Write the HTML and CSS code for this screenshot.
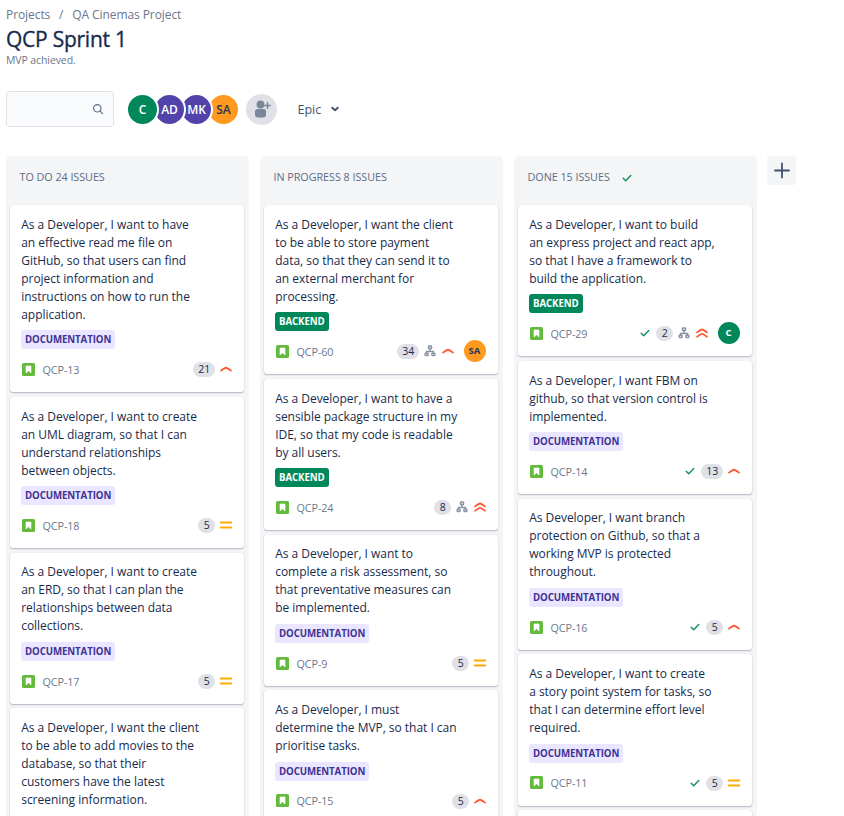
FILE: index.html
```
<!DOCTYPE html>
<html lang="en">
<head>
<meta charset="utf-8">
<title>QCP Sprint 1</title>
<link rel="stylesheet" href="styles.css">
</head>
<body>
<svg class="defs" width="0" height="0">
  <symbol id="story" viewBox="0 0 13 13"><rect width="13" height="13" rx="1.5" fill="#63ba3c"/><path d="M4 3h5v7L6.5 7.8 4 10z" fill="#fff" stroke="#fff" stroke-width=".6" stroke-linejoin="round"/></symbol>
  <symbol id="high" viewBox="0 0 14 14"><path d="M2 8.6Q4.5 6.6 7 5.6Q9.500 6.600 12 8.600" fill="none" stroke="#ff5630" stroke-width="1.7" stroke-linecap="round" stroke-linejoin="round"/></symbol>
  <symbol id="highest" viewBox="0 0 14 14"><path d="M2 6.400Q4.500 4.400 7 3.400Q9.500 4.400 12 6.400M2 10.800Q4.500 8.800 7 7.800Q9.500 8.800 12 10.800" fill="none" stroke="#ff5630" stroke-width="1.7" stroke-linecap="round" stroke-linejoin="round"/></symbol>
  <symbol id="medium" viewBox="0 0 14 14"><path d="M1.700 4.500h10.600M1.700 9.500h10.600" stroke="#ffab00" stroke-width="1.800" stroke-linecap="round"/></symbol>
  <symbol id="check" viewBox="0 0 14 14"><path d="M3.200 7.300L5.700 9.800L10.800 4.400" fill="none" stroke="#159060" stroke-width="1.400" stroke-linecap="round" stroke-linejoin="round"/></symbol>
  <symbol id="tree" viewBox="0 0 14 14"><path d="M7 5v2.500M3.500 9.500V7.500h7v2" fill="none" stroke="#8993a4" stroke-width="1.400"/><g fill="#fff" stroke="#8993a4" stroke-width="1.500"><rect x="5.500" y="2" width="3" height="2.600" rx=".5"/><rect x="2.200" y="9.300" width="2.800" height="2.300" rx=".5"/><rect x="9" y="9.300" width="2.800" height="2.300" rx=".5"/></g></symbol>
</svg>
<header class="header">
  <nav class="crumbs"><span>Projects</span><span class="slash">/</span><span>QA Cinemas Project</span></nav>
  <h1>QCP Sprint 1</h1>
  <p class="goal">MVP achieved.</p>
</header>
<div class="toolbar">
  <div class="search"><svg width="14" height="14" viewBox="0 0 14 14" fill="none" stroke="#5e6c84" stroke-width="1.200" stroke-linecap="round"><circle cx="6.300" cy="6.300" r="3.700"/><path d="M9.100 9.100l2.500 2.500"/></svg></div>
  <div class="people"><span class="person green">C</span><span class="person purple">AD</span><span class="person purple">MK</span><span class="person orange">SA</span></div>
  <div class="add-person"><svg width="31" height="31" viewBox="0 0 31 31"><g fill="#7a869a"><circle cx="14.500" cy="10.500" r="3.900"/><path d="M9 17.500q0-2.500 2.500-2.500h6q2.500 0 2.500 2.500v3q0 3-3 3h-5q-3 0-3-3z"/></g><path d="M21.500 8.800v5.400M18.800 11.500h5.400" stroke="#7a869a" stroke-width="1.500" stroke-linecap="round"/></svg></div>
  <div class="epic">Epic<svg width="10" height="8" viewBox="0 0 10 8"><path d="M2.200 2.700l2.800 2.600 2.800-2.600" fill="none" stroke="#42526e" stroke-width="1.900" stroke-linecap="round" stroke-linejoin="round"/></svg></div>
</div>
<main class="board">
  <section class="column">
    <h2>TO DO 24 ISSUES</h2>
    <article class="card"><p>As a Developer, I want to have<br>an effective read me file on<br>GitHub, so that users can find<br>project information and<br>instructions on how to run the<br>application.</p><span class="tag doc">DOCUMENTATION</span>
      <footer><svg class="story"><use href="#story"/></svg><span class="key">QCP-13</span><span class="points wide">21</span><svg class="icon"><use href="#high"/></svg></footer></article>
    <article class="card"><p>As a Developer, I want to create<br>an UML diagram, so that I can<br>understand relationships<br>between objects.</p><span class="tag doc">DOCUMENTATION</span>
      <footer><svg class="story"><use href="#story"/></svg><span class="key">QCP-18</span><span class="points">5</span><svg class="icon"><use href="#medium"/></svg></footer></article>
    <article class="card"><p>As a Developer, I want to create<br>an ERD, so that I can plan the<br>relationships between data<br>collections.</p><span class="tag doc">DOCUMENTATION</span>
      <footer><svg class="story"><use href="#story"/></svg><span class="key">QCP-17</span><span class="points">5</span><svg class="icon"><use href="#medium"/></svg></footer></article>
    <article class="card"><p>As a Developer, I want the client<br>to be able to add movies to the<br>database, so that their<br>customers have the latest<br>screening information.</p></article>
  </section>
  <section class="column">
    <h2>IN PROGRESS 8 ISSUES</h2>
    <article class="card"><p>As a Developer, I want the client<br>to be able to store payment<br>data, so that they can send it to<br>an external merchant for<br>processing.</p><span class="tag back">BACKEND</span>
      <footer><svg class="story"><use href="#story"/></svg><span class="key">QCP-60</span><span class="points wide">34</span><svg class="icon"><use href="#tree"/></svg><svg class="icon"><use href="#high"/></svg><span class="assignee orange">SA</span></footer></article>
    <article class="card"><p>As a Developer, I want to have a<br>sensible package structure in my<br>IDE, so that my code is readable<br>by all users.</p><span class="tag back">BACKEND</span>
      <footer><svg class="story"><use href="#story"/></svg><span class="key">QCP-24</span><span class="points">8</span><svg class="icon"><use href="#tree"/></svg><svg class="icon"><use href="#highest"/></svg></footer></article>
    <article class="card"><p>As a Developer, I want to<br>complete a risk assessment, so<br>that preventative measures can<br>be implemented.</p><span class="tag doc">DOCUMENTATION</span>
      <footer><svg class="story"><use href="#story"/></svg><span class="key">QCP-9</span><span class="points">5</span><svg class="icon"><use href="#medium"/></svg></footer></article>
    <article class="card"><p>As a Developer, I must<br>determine the MVP, so that I can<br>prioritise tasks.</p><span class="tag doc">DOCUMENTATION</span>
      <footer><svg class="story"><use href="#story"/></svg><span class="key">QCP-15</span><span class="points">5</span><svg class="icon"><use href="#high"/></svg></footer></article>
  </section>
  <section class="column">
    <h2>DONE 15 ISSUES<svg class="icon"><use href="#check"/></svg></h2>
    <article class="card"><p>As a Developer, I want to build<br>an express project and react app,<br>so that I have a framework to<br>build the application.</p><span class="tag back">BACKEND</span>
      <footer><svg class="story"><use href="#story"/></svg><span class="key">QCP-29</span><svg class="icon"><use href="#check"/></svg><span class="points">2</span><svg class="icon"><use href="#tree"/></svg><svg class="icon"><use href="#highest"/></svg><span class="assignee green">C</span></footer></article>
    <article class="card"><p>As a Developer, I want FBM on<br>github, so that version control is<br>implemented.</p><span class="tag doc">DOCUMENTATION</span>
      <footer><svg class="story"><use href="#story"/></svg><span class="key">QCP-14</span><svg class="icon"><use href="#check"/></svg><span class="points wide">13</span><svg class="icon"><use href="#high"/></svg></footer></article>
    <article class="card"><p>As Developer, I want branch<br>protection on Github, so that a<br>working MVP is protected<br>throughout.</p><span class="tag doc">DOCUMENTATION</span>
      <footer><svg class="story"><use href="#story"/></svg><span class="key">QCP-16</span><svg class="icon"><use href="#check"/></svg><span class="points">5</span><svg class="icon"><use href="#high"/></svg></footer></article>
    <article class="card"><p>As a Developer, I want to create<br>a story point system for tasks, so<br>that I can determine effort level<br>required.</p><span class="tag doc">DOCUMENTATION</span>
      <footer><svg class="story"><use href="#story"/></svg><span class="key">QCP-11</span><svg class="icon"><use href="#check"/></svg><span class="points">5</span><svg class="icon"><use href="#medium"/></svg></footer></article>
    <article class="card next"></article>
  </section>
  <div class="add-column"><svg width="29" height="29" viewBox="0 0 29 29"><path d="M15 7.500v14M8 14.500h14" stroke="#42526e" stroke-width="1.800" stroke-linecap="round"/></svg></div>
</main>
</body>
</html>
```
FILE: styles.css
```
* { box-sizing: border-box; }
body {
  margin: 0;
  padding: 6px 6px 0;
  width: 844px;
  height: 816px;
  overflow: hidden;
  background: #fff;
  color: #172b4d;
  font-family: "Open Sans", "Noto Sans", sans-serif;
  font-size: 12px;
}
h1, h2, p { margin: 0; font-weight: 400; }
svg { display: block; flex: none; }
.defs { position: absolute; }
.header { height: 85px; }
.crumbs { display: flex; height: 18px; line-height: 18px; color: #6b778c; letter-spacing: -0.08px; }
.slash { width: 22px; text-align: center; }
h1 { height: 29px; line-height: 30px; font-size: 21px; font-weight: 500; letter-spacing: -0.25px; -webkit-text-stroke: 0.35px #172b4d; }
.goal { height: 14px; line-height: 14px; font-size: 10.5px; color: #6b778c; letter-spacing: -0.1px; }
.toolbar { display: flex; align-items: center; height: 36px; }
.search { width: 108px; height: 36px; border: 1px solid #dfe1e6; border-radius: 3px; background: #fafbfc; display: flex; align-items: center; justify-content: flex-end; padding-right: 8px; }
.people { display: flex; margin-left: 12px; }
.person { width: 33px; height: 33px; margin-right: -6px; border: 2px solid #fff; border-radius: 50%; line-height: 29px; text-align: center; font-size: 12px; font-weight: 600; color: #fff; }
.people .person:nth-child(1) { z-index: 4; }
.people .person:nth-child(2) { z-index: 3; }
.people .person:nth-child(3) { z-index: 2; }
.green { background-color: #00875a; color: #fff; }
.purple { background-color: #5243aa; }
.people .orange, .orange { background-color: #ff991f; color: #253858; }
.add-person { width: 31px; height: 31px; margin-left: 12px; border-radius: 50%; background: #dfe1e6; }
.epic { display: flex; align-items: center; gap: 9px; margin-left: 20.500px; font-size: 12.500px; color: #42526e; }
.board { display: flex; align-items: flex-start; gap: 11px; margin-top: 29px; }
.column { width: 243px; height: 680px; padding: 0 4px; border-radius: 5px 5px 0 0; background: #f4f5f7; }
h2 { display: flex; align-items: center; gap: 6px; height: 49px; padding: 0 0 8px 9.500px; font-size: 10.800px; color: #5e6c84; letter-spacing: -0.05px; }
h2 .icon { margin-top: 2px; }
.card { width: 234px; margin-bottom: 4.350px; padding: 10.800px 11.500px 11.500px; border-radius: 3px; background: #fff; box-shadow: 0 1px 1.500px rgba(9, 30, 66, .28), 0 0 1px rgba(9, 30, 66, .12); }
.card p { margin-left: -0.3px; line-height: 18px; white-space: nowrap; letter-spacing: -0.03px; }
.next { height: 40px; }
.tag { display: block; width: fit-content; height: 19px; margin: 6.500px 0 0 -0.5px; padding: 0 4px; border-radius: 3px; line-height: 19px; font-size: 9.700px; font-weight: 700; letter-spacing: -0.1px; }
.doc { background: #eae6ff; color: #403294; }
.back { background: #00875a; color: #fff; }
.card footer { display: flex; align-items: center; height: 22px; margin-top: 9.200px; margin-bottom: .5px; }
.story { width: 13px; height: 13px; }
.key { margin: 0 auto 0 8px; font-size: 10.800px; color: #6b778c; letter-spacing: -0.1px; }
.icon { width: 14px; height: 14px; margin-left: 4px; }
.points { width: 17px; height: 15px; margin: 1px -0.7px 0 4px; border-radius: 8px; background: #dfe1e6; line-height: 15px; text-align: center; font-size: 10.500px; }
.wide { width: 22px; }
.assignee { width: 22px; height: 22px; margin: 0 1px 0 9px; border-radius: 50%; line-height: 22px; text-align: center; font-size: 9.500px; font-weight: 700; }
.add-column { width: 29px; height: 29px; margin-left: -1px; border-radius: 3px; background: #f4f5f7; }
```
